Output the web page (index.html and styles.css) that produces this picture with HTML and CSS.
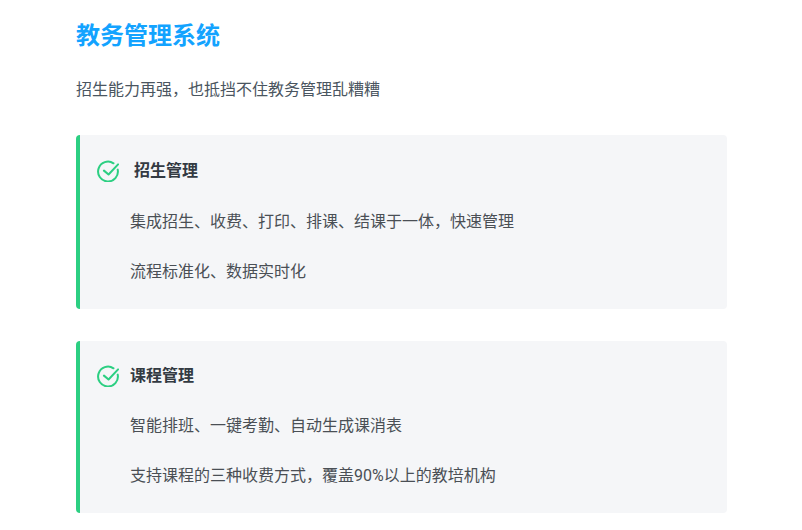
FILE: index.html
```html
<!DOCTYPE html>
<html lang="zh-CN">
<head>
<meta charset="utf-8">
<title>教务管理系统</title>
<link rel="stylesheet" href="styles.css">
</head>
<body>
<main class="page">
  <h1 class="title">教务管理系统</h1>
  <p class="lead">招生能力再强，也抵挡不住教务管理乱糟糟</p>
  <section class="card card-first">
    <h2 class="card-head card-head-wide">
      <svg class="check" viewBox="0 0 24 24" aria-hidden="true"><path d="M22.6 10.5A10.8 10.8 0 1 1 18 3.6"/><path d="M7.6 11.6l5 4.2L23 4.8"/></svg>
      招生管理
    </h2>
    <p class="line">集成招生、收费、打印、排课、结课于一体，快速管理</p>
    <p class="line">流程标准化、数据实时化</p>
  </section>
  <section class="card card-second">
    <h2 class="card-head">
      <svg class="check" viewBox="0 0 24 24" aria-hidden="true"><path d="M22.6 10.5A10.8 10.8 0 1 1 18 3.6"/><path d="M7.6 11.6l5 4.2L23 4.8"/></svg>
      课程管理
    </h2>
    <p class="line">智能排班、一键考勤、自动生成课消表</p>
    <p class="line">支持课程的三种收费方式，覆盖90%以上的教培机构</p>
  </section>
</main>
</body>
</html>
```
FILE: styles.css
```css
* { box-sizing: border-box; }
html, body { margin: 0; background: #fff; overflow: hidden; }
body { font-family: Roboto, "Noto Sans CJK SC", sans-serif; height: 530px; }
.page { width: 651px; margin-left: 76px; padding-top: 18px; }
.title { margin: 0; font-size: 24px; line-height: 36px; font-weight: 700; color: #13a3ff; }
.lead { margin: 0; padding-top: 24px; font-size: 16px; line-height: 24px; color: #4a5560; }
.card { margin-top: 32px; padding-left: 17px; background: #f5f6f8; border-left: 4px solid #2ccf82; border-radius: 4px; }
.lead + .card { margin-top: 33px; }
.card-first { height: 174px; padding-top: 24px; }
.card-second { height: 172px; padding-top: 23px; }
.card-head { display: flex; align-items: center; gap: 11px; margin: 0; height: 24px; font-size: 16px; line-height: 24px; font-weight: 700; color: #333a42; }
.card-head-wide { gap: 15px; }
.check { width: 22px; height: 22px; fill: none; stroke: #2ccf82; stroke-width: 2.2; stroke-linecap: round; stroke-linejoin: round; flex: none; }
.line { margin: 0; padding: 0 0 0 33px; font-size: 16px; line-height: 50px; color: #4a4f55; }
.card-head + .line { margin-top: 13px; }
.card-first .card-head + .line { margin-top: 14px; }
```
